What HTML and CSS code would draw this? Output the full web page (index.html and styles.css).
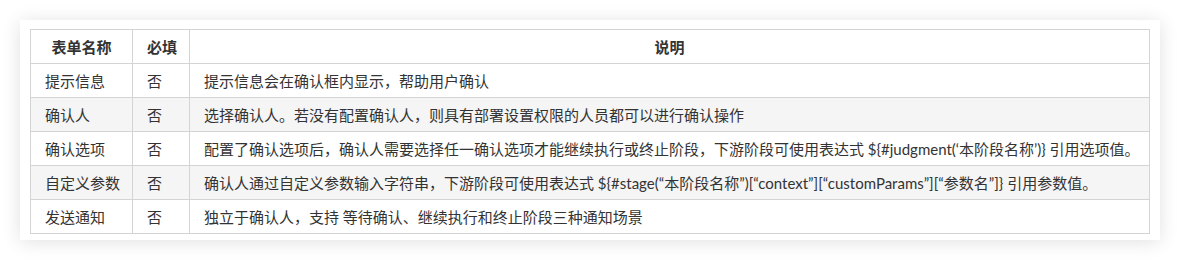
FILE: index.html
```html
<!DOCTYPE html>
<html lang="zh-CN">
<head>
<meta charset="utf-8">
<link rel="stylesheet" href="styles.css">
</head>
<body>
<div class="card">
  <table class="spec">
    <colgroup>
      <col class="c-name">
      <col class="c-req">
      <col class="c-desc">
    </colgroup>
    <thead>
      <tr><th>表单名称</th><th>必填</th><th>说明</th></tr>
    </thead>
    <tbody>
      <tr><td>提示信息</td><td>否</td><td>提示信息会在确认框内显示，帮助用户确认</td></tr>
      <tr><td>确认人</td><td>否</td><td>选择确认人。若没有配置确认人，则具有部署设置权限的人员都可以进行确认操作</td></tr>
      <tr><td>确认选项</td><td>否</td><td>配置了确认选项后，确认人需要选择任一确认选项才能继续执行或终止阶段，下游阶段可使用表达式 ${#judgment(‘本阶段名称’)} 引用选项值。</td></tr>
      <tr><td>自定义参数</td><td>否</td><td>确认人通过自定义参数输入字符串，下游阶段可使用表达式 ${#stage(“本阶段名称”)[“context”][“customParams”][“参数名”]} 引用参数值。</td></tr>
      <tr><td>发送通知</td><td>否</td><td>独立于确认人，支持 等待确认、继续执行和终止阶段三种通知场景</td></tr>
    </tbody>
  </table>
</div>
</body>
</html>
```

FILE: styles.css
```css
html, body {
  margin: 0;
  padding: 0;
  background: #ffffff;
}
body {
  padding: 20px;
  font-family: "Lato", "Noto Sans CJK SC", sans-serif;
  font-size: 15px;
  color: #333333;
}
.card {
  width: 1140px;
  height: 220px;
  box-sizing: border-box;
  padding: 9px 10px 0 10px;
  background: #ffffff;
  box-shadow: 0 2px 18px rgba(0, 0, 0, 0.12);
}
.spec {
  width: 1120px;
  border-collapse: collapse;
  table-layout: fixed;
}
.c-name { width: 102px; }
.c-req { width: 57px; }
.spec th, .spec td {
  border: 1px solid #d4d4d4;
  height: 34px;
  padding: 0 14px;
  box-sizing: border-box;
  line-height: 20px;
  text-align: left;
  white-space: nowrap;
}
.spec th {
  font-weight: bold;
  text-align: center;
}
.spec tbody tr:nth-child(even) td {
  background: #f5f5f5;
}
```
